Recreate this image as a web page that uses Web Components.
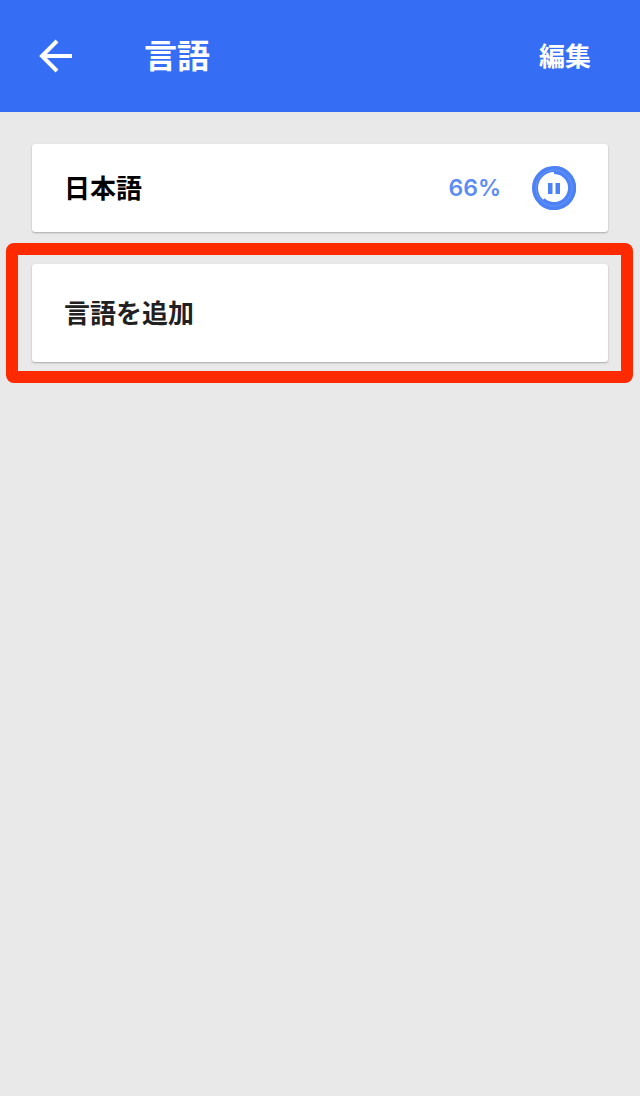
<!DOCTYPE html>
<html lang="ja">
<head>
<meta charset="utf-8">
<title>言語</title>
<style>
  html, body{
    margin: 0;
    height: 100%;
    background: #e9e9e9;
    font-family: "Liberation Sans", "Noto Sans CJK JP", sans-serif;
  }
</style>
</head>
<body>
<app-header title-text="言語" action="編集"></app-header>
<language-list>
  <language-card>
    <span>日本語</span>
    <download-status slot="end" percent="66%"></download-status>
  </language-card>
  <highlight-frame>
    <language-card tall muted><span>言語を追加</span></language-card>
  </highlight-frame>
</language-list>

<script>
const appHeaderTemplate = document.createElement('template');
appHeaderTemplate.innerHTML = `
  <style>
    :host{
      display: flex;
      align-items: center;
      height: 112px;
      background: #356ef5;
      color: #fff;
      font-family: "Noto Sans CJK JP", sans-serif;
    }
    svg{
      display: block;
      width: 34px;
      height: 34px;
      margin-left: 39px;
    }
    .title{
      margin-left: 71px;
      margin-bottom: 3px;
      font-size: 33px;
      font-weight: 700;
      line-height: 1;
      flex: 1;
    }
    .action{
      margin-right: 49px;
      margin-bottom: 2px;
      font-size: 26px;
      font-weight: 700;
      line-height: 1;
    }
  </style>
  <svg viewBox="0 0 34 34" fill="none" stroke="#fff" stroke-width="4">
    <path d="M33 17H4"/>
    <path d="M18 2 3 17l15 15"/>
  </svg>
  <div class="title"></div>
  <div class="action"></div>
`;

class AppHeader extends HTMLElement{
  constructor(){
    super();
    this.attachShadow({mode: 'open'});
    this.shadowRoot.appendChild(appHeaderTemplate.content.cloneNode(true));
    this.shadowRoot.querySelector('.title').textContent = this.getAttribute('title-text');
    this.shadowRoot.querySelector('.action').textContent = this.getAttribute('action');
  }
}

const languageListTemplate = document.createElement('template');
languageListTemplate.innerHTML = `
  <style>
    :host{
      display: block;
      padding: 32px 6px 0;
    }
  </style>
  <slot></slot>
`;

class LanguageList extends HTMLElement{
  constructor(){
    super();
    this.attachShadow({mode: 'open'});
    this.shadowRoot.appendChild(languageListTemplate.content.cloneNode(true));
  }
}

const languageCardTemplate = document.createElement('template');
languageCardTemplate.innerHTML = `
  <style>
    :host{
      display: flex;
      align-items: center;
      justify-content: space-between;
      box-sizing: border-box;
      height: 88px;
      margin: 0 26px;
      padding: 0 32px;
      background: #fff;
      border-radius: 3px;
      box-shadow: 0 1px 2px rgba(0,0,0,.28);
      color: #000;
      font-family: "Noto Sans CJK JP", sans-serif;
      font-size: 26px;
      font-weight: 700;
      line-height: 1;
    }
    :host([tall]){
      height: 98px;
      margin: 0;
    }
    :host([muted]){
      color: #212121;
    }
    ::slotted(span){
      margin-bottom: 2px;
    }
  </style>
  <slot></slot>
  <slot name="end"></slot>
`;

class LanguageCard extends HTMLElement{
  constructor(){
    super();
    this.attachShadow({mode: 'open'});
    this.shadowRoot.appendChild(languageCardTemplate.content.cloneNode(true));
  }
}

const downloadStatusTemplate = document.createElement('template');
downloadStatusTemplate.innerHTML = `
  <style>
    :host{
      display: flex;
      align-items: center;
      gap: 31px;
      color: #5b8cf5;
      font-family: Inter, "Liberation Sans", sans-serif;
      font-size: 23px;
      font-weight: 600;
    }
    svg{
      display: block;
      width: 44px;
      height: 44px;
    }
  </style>
  <span class="percent"></span>
  <svg viewBox="0 0 44 44" fill="none">
    <circle cx="22" cy="22" r="19" stroke="#4c82f5" stroke-width="6"/>
    <path d="M22 4A18 18 0 1 1 9.8 35.2" stroke="#4c82f5" stroke-width="8"/>
    <circle cx="22" cy="22" r="18" stroke="#cfdffc" stroke-width=".6" opacity=".35"/>
    <rect x="16" y="17" width="4.5" height="11" fill="#4c82f5"/>
    <rect x="23.5" y="17" width="4.5" height="11" fill="#4c82f5"/>
  </svg>
`;

class DownloadStatus extends HTMLElement{
  constructor(){
    super();
    this.attachShadow({mode: 'open'});
    this.shadowRoot.appendChild(downloadStatusTemplate.content.cloneNode(true));
    this.shadowRoot.querySelector('.percent').textContent = this.getAttribute('percent');
  }
}

const highlightFrameTemplate = document.createElement('template');
highlightFrameTemplate.innerHTML = `
  <style>
    :host{
      display: block;
      box-sizing: border-box;
      width: 627px;
      height: 140px;
      margin-top: 11px;
      padding: 9px 13px 9px 14px;
      border: 12px solid #ff2a00;
      border-radius: 8px;
    }
  </style>
  <slot></slot>
`;

class HighlightFrame extends HTMLElement{
  constructor(){
    super();
    this.attachShadow({mode: 'open'});
    this.shadowRoot.appendChild(highlightFrameTemplate.content.cloneNode(true));
  }
}

window.customElements.define('app-header', AppHeader);
window.customElements.define('language-list', LanguageList);
window.customElements.define('language-card', LanguageCard);
window.customElements.define('download-status', DownloadStatus);
window.customElements.define('highlight-frame', HighlightFrame);
</script>
</body>
</html>
